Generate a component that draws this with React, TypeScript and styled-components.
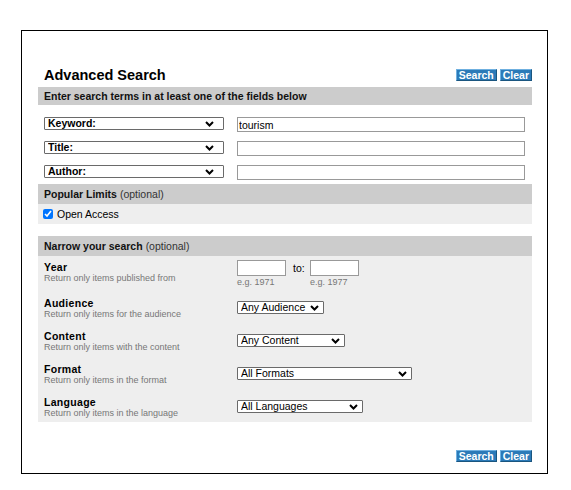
import styled, { createGlobalStyle } from "styled-components";

const GlobalStyle = createGlobalStyle`
  html, body {
    margin: 0;
    padding: 0;
    background: #fff;
  }
  body {
    font-family: "Liberation Sans", Arial, sans-serif;
    color: #000;
  }
`;

const terms = [
  { label: "Keyword:", value: "tourism" },
  { label: "Title:", value: "" },
  { label: "Author:", value: "" },
];

const limits = [
  { title: "Audience", hint: "Return only items for the audience", option: "Any Audience", width: 87 },
  { title: "Content", hint: "Return only items with the content", option: "Any Content", width: 108 },
  { title: "Format", hint: "Return only items in the format", option: "All Formats", width: 175 },
  { title: "Language", hint: "Return only items in the language", option: "All Languages", width: 126 },
];

function Dropdown({ width, value, bold, arrowGap = 5 }: { width: number; value: string; bold?: boolean; arrowGap?: number }) {
  return (
    <SelectBox $w={width}>
      <NativeSelect $bold={bold} defaultValue={value}>
        <option>{value}</option>
      </NativeSelect>
      <Chevron $right={arrowGap} width="9" height="6" viewBox="0 0 9 6">
        <polyline points="1,1 4.5,4.5 8,1" fill="none" stroke="#000" strokeWidth="2" />
      </Chevron>
    </SelectBox>
  );
}

export default function App() {
  return (
    <>
      <GlobalStyle />
      <Frame>
        <TitleRow>
          <Title>Advanced Search</Title>
          <ButtonGroup>
            <Btn type="button">Search</Btn>
            <Btn type="button">Clear</Btn>
          </ButtonGroup>
        </TitleRow>

        <SectionBar $h={18}>Enter search terms in at least one of the fields below</SectionBar>
        <TermsBlock>
          {terms.map((t) => (
            <TermRow key={t.label}>
              <Dropdown width={180} value={t.label} bold arrowGap={10} />
              <TermInput type="text" defaultValue={t.value} />
            </TermRow>
          ))}
        </TermsBlock>

        <SectionBar $h={20}>
          Popular Limits <Optional>(optional)</Optional>
        </SectionBar>
        <LimitsRow>
          <Checkbox type="checkbox" defaultChecked />
          Open Access
        </LimitsRow>

        <SectionBar $h={20} $gap={12}>
          Narrow your search <Optional>(optional)</Optional>
        </SectionBar>
        <NarrowArea>
          <LimitRow>
            <LabelCol>
              <LabelTitle>Year</LabelTitle>
              <LabelHint>Return only items published from</LabelHint>
            </LabelCol>
            <YearGroup>
              <YearCol>
                <YearInput type="text" />
                <Hint>e.g. 1971</Hint>
              </YearCol>
              <ToLabel>to:</ToLabel>
              <YearCol>
                <YearInput type="text" />
                <Hint>e.g. 1977</Hint>
              </YearCol>
            </YearGroup>
          </LimitRow>
          {limits.map((l) => (
            <LimitRow key={l.title}>
              <LabelCol>
                <LabelTitle>{l.title}</LabelTitle>
                <LabelHint>{l.hint}</LabelHint>
              </LabelCol>
              <ControlCol>
                <Dropdown width={l.width} value={l.option} />
              </ControlCol>
            </LimitRow>
          ))}
        </NarrowArea>

        <Footer>
          <ButtonGroup>
            <Btn type="button">Search</Btn>
            <Btn type="button">Clear</Btn>
          </ButtonGroup>
        </Footer>
      </Frame>
    </>
  );
}

const Frame = styled.div`
  box-sizing: border-box;
  margin: 30px 0 0 21px;
  width: 527px;
  height: 444px;
  border: 1px solid #000;
  padding: 32px 15px 0 16px;
`;

const TitleRow = styled.div`
  display: flex;
  justify-content: space-between;
  align-items: center;
  height: 24px;
  padding-left: 6px;
`;

const Title = styled.h1`
  margin: 0;
  font-size: 14.5px;
  font-weight: 700;
  line-height: 16px;
`;

const ButtonGroup = styled.div`
  display: flex;
  gap: 3px;
`;

const Btn = styled.button`
  box-sizing: border-box;
  height: 12px;
  padding: 0 2px;
  margin: 0;
  font-family: "Liberation Sans", Arial, sans-serif;
  font-size: 10.5px;
  font-weight: 700;
  line-height: 10px;
  color: #fff;
  background: #2b7ab8;
  border: 1px solid;
  border-color: #6fb0e0 #1a557f #1a557f #6fb0e0;
  border-radius: 0;
  cursor: pointer;
`;

const SectionBar = styled.div<{ $h: number; $gap?: number }>`
  display: flex;
  align-items: center;
  gap: 3px;
  height: ${(p) => p.$h}px;
  margin-top: ${(p) => p.$gap || 0}px;
  padding-left: 6px;
  background: #cccccc;
  font-size: 10.5px;
  font-weight: 700;
  color: #111;
`;

const Optional = styled.span`
  font-weight: 400;
  color: #333;
`;

const TermsBlock = styled.div`
  display: flex;
  flex-direction: column;
  gap: 9px;
  padding: 12px 0 4px 6px;
`;

const TermRow = styled.div`
  display: flex;
  align-items: flex-start;
  gap: 13px;
`;

const SelectBox = styled.div<{ $w: number }>`
  position: relative;
  width: ${(p) => p.$w}px;
  height: 13px;
`;

const NativeSelect = styled.select<{ $bold?: boolean }>`
  appearance: none;
  -webkit-appearance: none;
  box-sizing: border-box;
  display: block;
  width: 100%;
  height: 13px;
  margin: 0;
  padding: 0 0 0 3px;
  font-family: "Liberation Sans", Arial, sans-serif;
  font-size: 10.5px;
  font-weight: ${(p) => (p.$bold ? 700 : 400)};
  line-height: 11px;
  color: #000;
  background: #fff;
  border: 1px solid #6a6a6a;
  border-radius: 1px;
  outline: none;
`;

const Chevron = styled.svg<{ $right: number }>`
  position: absolute;
  right: ${(p) => p.$right}px;
  top: 4px;
  pointer-events: none;
`;

const TermInput = styled.input`
  box-sizing: border-box;
  width: 288px;
  height: 15px;
  margin: 0;
  padding: 0 1px;
  font-family: "Liberation Sans", Arial, sans-serif;
  font-size: 10.5px;
  border: 1px solid #999;
  border-radius: 0;
  outline: none;
`;

const LimitsRow = styled.label`
  display: flex;
  align-items: center;
  height: 20px;
  padding-left: 5px;
  background: #eeeeee;
  font-size: 10.5px;
  color: #000;
`;

const Checkbox = styled.input`
  width: 10px;
  height: 10px;
  margin: 0 4px 0 0;
`;

const NarrowArea = styled.div`
  display: flex;
  flex-direction: column;
  gap: 9px;
  padding: 4px 0 3px 6px;
  background: #eeeeee;
`;

const LimitRow = styled.div`
  display: flex;
  align-items: flex-start;
`;

const LabelCol = styled.div`
  width: 193px;
  display: flex;
  flex-direction: column;
  padding-top: 1px;
`;

const LabelTitle = styled.div`
  font-size: 10.5px;
  font-weight: 700;
  line-height: 12px;
  letter-spacing: 0.3px;
  color: #000;
`;

const LabelHint = styled.div`
  font-size: 9px;
  line-height: 11px;
  color: #777;
`;

const ControlCol = styled.div`
  padding-top: 5px;
`;

const YearGroup = styled.div`
  display: flex;
  align-items: flex-start;
`;

const YearCol = styled.div`
  display: flex;
  flex-direction: column;
`;

const YearInput = styled.input`
  box-sizing: border-box;
  width: 49px;
  height: 16px;
  margin: 0;
  padding: 0 1px;
  font-size: 10.5px;
  border: 1px solid #999;
  border-radius: 0;
  background: #fff;
  outline: none;
`;

const Hint = styled.div`
  margin-top: 1px;
  font-size: 9px;
  line-height: 10px;
  color: #777;
`;

const ToLabel = styled.span`
  width: 24px;
  padding-left: 7px;
  box-sizing: border-box;
  font-size: 10.5px;
  line-height: 16px;
  color: #000;
`;

const Footer = styled.div`
  display: flex;
  justify-content: flex-end;
  margin-top: 28px;
`;
